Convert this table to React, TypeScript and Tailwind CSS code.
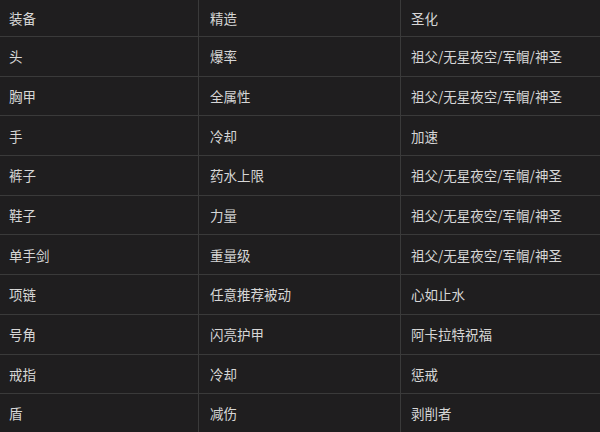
const rows: [string, string, string][] = [
  ["头", "爆率", "祖父/无星夜空/军帽/神圣"],
  ["胸甲", "全属性", "祖父/无星夜空/军帽/神圣"],
  ["手", "冷却", "加速"],
  ["裤子", "药水上限", "祖父/无星夜空/军帽/神圣"],
  ["鞋子", "力量", "祖父/无星夜空/军帽/神圣"],
  ["单手剑", "重量级", "祖父/无星夜空/军帽/神圣"],
  ["项链", "任意推荐被动", "心如止水"],
  ["号角", "闪亮护甲", "阿卡拉特祝福"],
  ["戒指", "冷却", "惩戒"],
  ["盾", "减伤", "剥削者"],
];

function Row({ cells, header }: { cells: [string, string, string]; header?: boolean }) {
  return (
    <div
      className={
        header
          ? "grid grid-cols-[198px_202px_200px] h-[36px]"
          : "grid grid-cols-[198px_202px_200px] h-[39.7px] border-t border-[#3a3a3a]"
      }
    >
      <div className="flex items-center pl-[9px]">{cells[0]}</div>
      <div className="flex items-center pl-[11px] border-l border-[#3a3a3a]">{cells[1]}</div>
      <div className="flex items-center pl-[10px] border-l border-[#3a3a3a]">{cells[2]}</div>
    </div>
  );
}

export default function App() {
  return (
    <div
      className="w-[600px] h-[432px] overflow-hidden bg-[#1f1e1f] text-[#d6d6d6] text-[13.5px]"
      style={{ fontFamily: '"Noto Sans CJK SC", "Liberation Sans", sans-serif' }}
    >
      <Row header cells={["装备", "精造", "圣化"]} />
      {rows.map((r) => (
        <Row key={r[0]} cells={r} />
      ))}
    </div>
  );
}
